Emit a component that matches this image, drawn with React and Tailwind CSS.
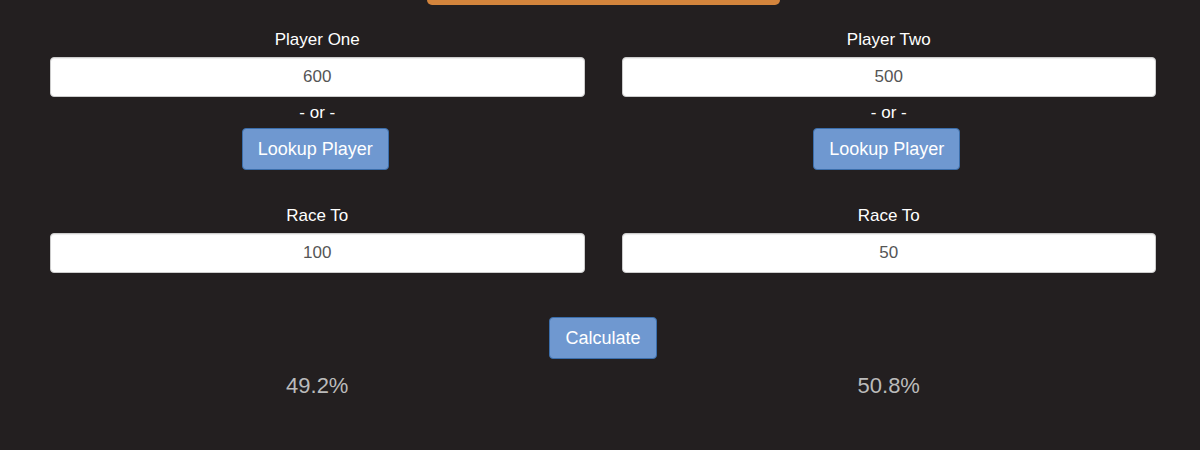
import React from "react";

const Field = ({ label, value }) => (
  <div className="flex flex-col items-center">
    <p className="text-white text-[17px] leading-[20px] mb-[7px]">{label}</p>
    <input
      readOnly
      value={value}
      className="w-full h-[40px] bg-white rounded-[4px] border border-[#cccccc] text-center text-[#555555] text-[17px] outline-none shadow-[inset_0_1px_1px_rgba(0,0,0,0.075)]"
    />
  </div>
);

const Btn = ({ children }) => (
  <button className="bg-[#6f98d0] border border-[#3b6eab] rounded-[4px] text-white text-[18px] h-[42px] px-[15px]">
    {children}
  </button>
);

const PlayerCol = ({ label, value, race }) => (
  <div className="flex flex-col">
    <div className="mt-[25px]">
      <Field label={label} value={value} />
    </div>
    <p className="text-white text-[17px] leading-[20px] text-center mt-[6px]">- or -</p>
    <div className="flex justify-center mt-[5px] mr-[4px]">
      <Btn>Lookup Player</Btn>
    </div>
    <div className="mt-[36px]">
      <Field label="Race To" value={race} />
    </div>
  </div>
);

const App = () => {
  return (
    <div
      className="w-[1200px] h-[450px] bg-[#231f20] overflow-hidden"
      style={{ fontFamily: '"Liberation Sans", Arial, sans-serif' }}
    >
      <div className="flex justify-center">
        <div className="w-[353px] h-[5px] bg-[#d3843c] rounded-b-[5px] ml-[7px]" />
      </div>
      <div className="grid grid-cols-2 gap-[37px] pl-[50px] pr-[44px]">
        <PlayerCol label="Player One" value="600" race="100" />
        <PlayerCol label="Player Two" value="500" race="50" />
      </div>
      <div className="flex justify-center mt-[44px] ml-[6px]">
        <Btn>Calculate</Btn>
      </div>
      <div className="grid grid-cols-2 gap-[37px] pl-[50px] pr-[44px] mt-[10px]">
        <p className="text-center text-[#bbbbbb] text-[22px]">49.2%</p>
        <p className="text-center text-[#bbbbbb] text-[22px]">50.8%</p>
      </div>
    </div>
  );
};

export default App;
